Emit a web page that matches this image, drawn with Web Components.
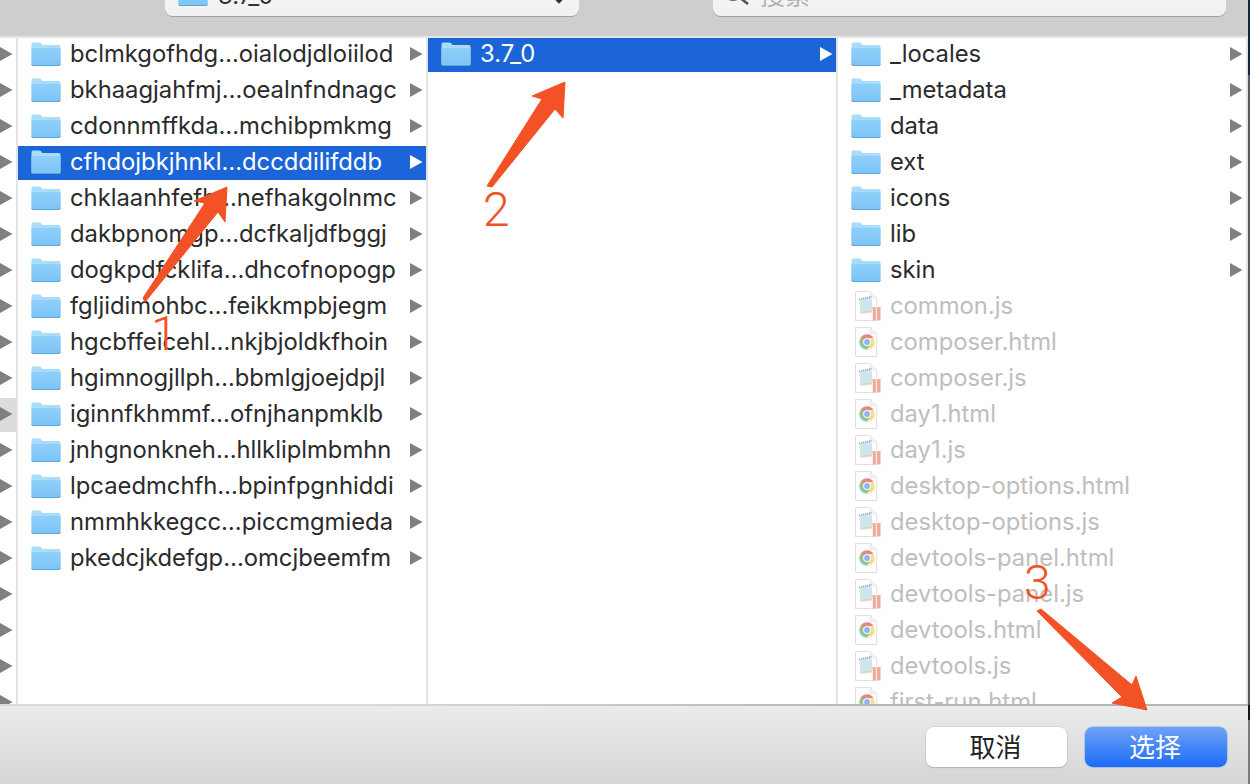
<!DOCTYPE html>
<html lang="zh">
<head>
<meta charset="utf-8">
<title>选择</title>
<style>
    html, body { margin: 0; height: 100%; overflow: hidden; }
    body {
        background: linear-gradient(#14233f 0, #14233f 75px, #5b5b5b 75px, #5b5b5b 705px, #161616 705px, #161616 720px, #7a7a7a 720px);
        font-family: "Inter", "Noto Sans CJK SC", sans-serif;
    }
</style>
</head>
<body>

<file-dialog>
    <dialog-toolbar slot="toolbar" location="3.7_0" placeholder="搜索"></dialog-toolbar>

    <path-stub slot="stub" rows="19" active="10"></path-stub>

    <browser-column>
        <file-row kind="folder" expand>bclmkgofhdg…oialodjdloiilod</file-row>
        <file-row kind="folder" expand>bkhaagjahfmj…oealnfndnagc</file-row>
        <file-row kind="folder" expand>cdonnmffkda…mchibpmkmg</file-row>
        <file-row kind="folder" expand selected>cfhdojbkjhnkl…dccddilifddb</file-row>
        <file-row kind="folder" expand>chklaanhfefh…nefhakgolnmc</file-row>
        <file-row kind="folder" expand>dakbpnomgp…dcfkaljdfbggj</file-row>
        <file-row kind="folder" expand>dogkpdfcklifa…dhcofnopogp</file-row>
        <file-row kind="folder" expand>fgljidimohbc…feikkmpbjegm</file-row>
        <file-row kind="folder" expand>hgcbffeicehl…nkjbjoldkfhoin</file-row>
        <file-row kind="folder" expand>hgimnogjllph…bbmlgjoejdpjl</file-row>
        <file-row kind="folder" expand>iginnfkhmmf…ofnjhanpmklb</file-row>
        <file-row kind="folder" expand>jnhgnonkneh…hllkliplmbmhn</file-row>
        <file-row kind="folder" expand>lpcaedmchfh…bpinfpgnhiddi</file-row>
        <file-row kind="folder" expand>nmmhkkegcc…piccmgmieda</file-row>
        <file-row kind="folder" expand>pkedcjkdefgp…omcjbeemfm</file-row>
    </browser-column>

    <browser-column>
        <file-row kind="folder" expand selected>3.7_0</file-row>
    </browser-column>

    <browser-column>
        <file-row kind="folder" expand>_locales</file-row>
        <file-row kind="folder" expand>_metadata</file-row>
        <file-row kind="folder" expand>data</file-row>
        <file-row kind="folder" expand>ext</file-row>
        <file-row kind="folder" expand>icons</file-row>
        <file-row kind="folder" expand>lib</file-row>
        <file-row kind="folder" expand>skin</file-row>
        <file-row kind="script">common.js</file-row>
        <file-row kind="page">composer.html</file-row>
        <file-row kind="script">composer.js</file-row>
        <file-row kind="page">day1.html</file-row>
        <file-row kind="script">day1.js</file-row>
        <file-row kind="page">desktop-options.html</file-row>
        <file-row kind="script">desktop-options.js</file-row>
        <file-row kind="page">devtools-panel.html</file-row>
        <file-row kind="script">devtools-panel.js</file-row>
        <file-row kind="page">devtools.html</file-row>
        <file-row kind="script">devtools.js</file-row>
        <file-row kind="page">first-run.html</file-row>
    </browser-column>

    <dialog-footer slot="footer">
        <push-button>取消</push-button>
        <push-button primary>选择</push-button>
    </dialog-footer>
</file-dialog>

<note-arrows></note-arrows>

<script>
const FOLDER_ICON = `
    <svg width="30" height="24" viewBox="0 0 30 24">
        <defs>
            <linearGradient id="fold" x1="0" y1="0" x2="0" y2="1">
                <stop offset="0" stop-color="#8fd0fa"/>
                <stop offset="1" stop-color="#7cc3f6"/>
            </linearGradient>
        </defs>
        <path d="M0.5 2 Q0.5 0.5 2 0.5 H8.5 Q9.5 0.5 10.3 1.6 L11.4 3 H28 Q29.5 3 29.5 4.5 V22 Q29.5 23.5 28 23.5 H2 Q0.5 23.5 0.5 22 Z" fill="#a9dcfb"/>
        <path d="M0.5 6 H29.5 V22 Q29.5 23.5 28 23.5 H2 Q0.5 23.5 0.5 22 Z" fill="url(#fold)"/>
        <path d="M0.5 22.4 Q0.7 23.5 2 23.5 H28 Q29.3 23.5 29.5 22.4" fill="none" stroke="#5ea6d8" stroke-width="1"/>
    </svg>`;

const SCRIPT_ICON = `
    <svg width="27" height="32" viewBox="0 0 27 32">
        <path d="M0.5 1 H16 L22.5 7.5 V31 H0.5 Z" fill="#fff" stroke="#dedede"/>
        <path d="M16 1 V7.5 H22.5" fill="#f2f2f2" stroke="#e4e4e4"/>
        <path d="M4.5 9 L17 6.5 L18.5 20 L5.5 22 Z" fill="#cfe6ef"/>
        <path d="M4.5 9 L17 6.5" stroke="#7f8f96" stroke-width="1.4" stroke-dasharray="1 1"/>
        <path d="M5.5 22 L18 20 V22.5 L6 24 Z" fill="#ded6bf"/>
        <rect x="18.5" y="17" width="3" height="14" fill="#f4a698"/>
        <rect x="23" y="17" width="3.5" height="14" fill="#f4a698"/>
    </svg>`;

const PAGE_ICON = `
    <svg width="27" height="32" viewBox="0 0 27 32">
        <path d="M0.5 1 H16 L22.5 7.5 V31 H0.5 Z" fill="#fff" stroke="#dedede"/>
        <path d="M16 1 V7.5 H22.5" fill="#f2f2f2" stroke="#e4e4e4"/>
        <g transform="translate(12.5 16)">
            <path d="M0 -8 A8 8 0 0 1 6.93 -4 L0 -4 A4 4 0 0 0 -3.46 -2 L-3.46 -2 L-6.93 -4 A8 8 0 0 1 0 -8 Z" fill="#e58a80"/>
            <path d="M6.93 -4 A8 8 0 0 1 0 8 L3.46 2 A4 4 0 0 0 3.46 -2 L0 -4 Z" fill="#f6e08e"/>
            <path d="M-6.93 -4 A8 8 0 0 0 0 8 L3.46 2 A4 4 0 0 1 -3.46 2 A4 4 0 0 1 -3.46 -2 Z" fill="#8fc79a"/>
            <circle r="3.8" fill="#fff"/>
            <circle r="3" fill="#8fb3ee"/>
        </g>
    </svg>`;

class FileDialog extends HTMLElement {
    constructor() {
        super();
        this.attachShadow({ mode: 'open' });
        this.shadowRoot.innerHTML = `
            <style>
                :host {
                    display: flex;
                    flex-direction: column;
                    width: 1248px;
                    height: 784px;
                    background: #e4e4e4;
                    overflow: hidden;
                }
                .panes {
                    flex: 1;
                    min-height: 0;
                    display: grid;
                    grid-template-columns: 16px repeat(3, 408px);
                    column-gap: 2px;
                    padding-top: 2px;
                    overflow: hidden;
                }
            </style>
            <slot name="toolbar"></slot>
            <div class="panes">
                <slot name="stub"></slot>
                <slot></slot>
            </div>
            <slot name="footer"></slot>
        `;
    }
}

class DialogToolbar extends HTMLElement {
    constructor() {
        super();
        this.attachShadow({ mode: 'open' });
    }

    connectedCallback() {
        const location = this.getAttribute('location') || '';
        const placeholder = this.getAttribute('placeholder') || '';
        this.shadowRoot.innerHTML = `
            <style>
                :host {
                    display: flex;
                    flex: none;
                    height: 36px;
                    box-sizing: border-box;
                    align-items: flex-end;
                    padding: 0 22px 20px 165px;
                    background: #cecece;
                    overflow: hidden;
                }
                .field {
                    flex: none;
                    display: flex;
                    align-items: center;
                    height: 44px;
                    box-sizing: border-box;
                    background: linear-gradient(#fafafa, #f1f1f1);
                    border-radius: 8px;
                    box-shadow: 0 1px 0 #a2a2a2;
                    font-size: 23.8px;
                }
                .popup {
                    width: 414px;
                    margin-right: 134px;
                    padding: 0 13px;
                    color: #333;
                }
                .popup span { flex: 1; margin-left: 10px; padding-top: 3px; }
                .search {
                    width: 513px;
                    padding-left: 9px;
                    color: #b2b2b2;
                }
                .search span { margin-left: 10px; font-family: "Noto Sans CJK SC", sans-serif; font-size: 25px; }
            </style>
            <div class="field popup">
                ${FOLDER_ICON}
                <span>${location}</span>
                <svg width="14" height="20" viewBox="0 0 14 20"><path d="M2 13 L7 18 L12 13" fill="none" stroke="#333" stroke-width="2.4"/></svg>
            </div>
            <div class="field search">
                <svg width="28" height="28" viewBox="0 0 28 28"><circle cx="11" cy="11" r="9" fill="none" stroke="#666" stroke-width="2"/><path d="M17.5 17.5 L26 24" stroke="#555" stroke-width="2.6"/></svg>
                <span>${placeholder}</span>
            </div>
        `;
    }
}

class PathStub extends HTMLElement {
    constructor() {
        super();
        this.attachShadow({ mode: 'open' });
    }

    connectedCallback() {
        const rows = Number(this.getAttribute('rows'));
        const active = Number(this.getAttribute('active'));
        let html = '';
        for (let i = 0; i < rows; i++) {
            html += `<div class="${i === active ? 'on' : ''}"><svg width="13" height="14" viewBox="0 0 13 14"><path d="M0 0 L12.5 7 L0 14 Z" fill="#808080"/></svg></div>`;
        }
        this.shadowRoot.innerHTML = `
            <style>
                :host { display: block; background: #fff; overflow: hidden; }
                div { height: 34px; margin-bottom: 2px; display: flex; align-items: center; box-sizing: border-box; padding-bottom: 2px; }
                .on { background: #dcdcdc; }
            </style>
            ${html}
        `;
    }
}

class BrowserColumn extends HTMLElement {
    constructor() {
        super();
        this.attachShadow({ mode: 'open' });
        this.shadowRoot.innerHTML = `
            <style>
                :host { display: block; background: #fff; overflow: hidden; min-width: 0; }
            </style>
            <slot></slot>
        `;
    }
}

class FileRow extends HTMLElement {
    constructor() {
        super();
        this.attachShadow({ mode: 'open' });
    }

    connectedCallback() {
        const kind = this.getAttribute('kind');
        const selected = this.hasAttribute('selected');
        const icon = kind === 'folder' ? FOLDER_ICON : kind === 'page' ? PAGE_ICON : SCRIPT_ICON;
        const arrow = this.hasAttribute('expand')
            ? `<svg class="arrow" width="13" height="14" viewBox="0 0 13 14"><path d="M0 0 L12.5 7 L0 14 Z" fill="${selected ? '#fff' : '#808080'}"/></svg>`
            : '';
        this.shadowRoot.innerHTML = `
            <style>
                :host {
                    display: flex;
                    align-items: center;
                    height: 34px;
                    margin-bottom: 2px;
                    padding: 0 0 2px 13px;
                    box-sizing: border-box;
                    font-size: 23.8px;
                    white-space: nowrap;
                    color: ${kind === 'folder' ? '#2b2b2b' : '#bebebe'};
                }
                :host([selected]) { background: #1c65d8; color: #fff; }
                .icon { flex: none; width: 30px; height: 32px; display: flex; align-items: center; justify-content: ${kind === 'folder' ? 'flex-start' : 'center'}; }
                .icon svg { margin-left: ${kind === 'folder' ? 0 : 4}px; }
                .name { flex: 1; margin-left: 9px; padding-bottom: 2px; }
                .arrow { flex: none; margin-right: 3px; }
            </style>
            <span class="icon">${icon}</span>
            <span class="name"><slot></slot></span>
            ${arrow}
        `;
    }
}

class DialogFooter extends HTMLElement {
    constructor() {
        super();
        this.attachShadow({ mode: 'open' });
        this.shadowRoot.innerHTML = `
            <style>
                :host {
                    display: flex;
                    flex: none;
                    height: 80px;
                    box-sizing: border-box;
                    justify-content: flex-end;
                    align-items: flex-start;
                    gap: 18px;
                    padding: 23px 21px 0 0;
                    background:
                        linear-gradient(90deg, #d8d8d8 0, #d8d8d8 30%, #b6b6b6 70%) top / 100% 2px no-repeat,
                        linear-gradient(#ececec, #d5d5d5);
                }
            </style>
            <slot></slot>
        `;
    }
}

class PushButton extends HTMLElement {
    constructor() {
        super();
        this.attachShadow({ mode: 'open' });
        this.shadowRoot.innerHTML = `
            <style>
                :host {
                    display: flex;
                    align-items: center;
                    justify-content: center;
                    width: 141px;
                    height: 40px;
                    box-sizing: border-box;
                    padding: 0 2px 3px 0;
                    border-radius: 8px;
                    background: #fff;
                    color: #222;
                    box-shadow: 0 0 0 0.5px #c4c4c4, 0 1px 1px #a8a8a8;
                    font: 26px "Noto Sans CJK SC", sans-serif;
                }
                :host([primary]) {
                    width: 142px;
                    background: linear-gradient(#6ea2f6, #1c6cf8);
                    color: #fff;
                    box-shadow: 0 0 0 0.5px #7fa6ec;
                }
            </style>
            <slot></slot>
        `;
    }
}

class NoteArrows extends HTMLElement {
    constructor() {
        super();
        this.attachShadow({ mode: 'open' });
        this.shadowRoot.innerHTML = `
            <style>
                :host { position: absolute; left: 0; top: 0; width: 1250px; height: 784px; pointer-events: none; }
                svg { display: block; }
                polygon { fill: #f25225; stroke: #f25225; stroke-width: 1; stroke-linejoin: round; }
                text { fill: #f25225; font: 300 48px Roboto, sans-serif; }
            </style>
            <svg width="1250" height="784" viewBox="0 0 1250 784">
                <polygon points="143,298 145,302 218,212 225,222 227,187 194,201 205,203"/>
                <polygon points="487,186 492,187 555,109 563,118 565,82 532,96 542,99"/>
                <polygon points="1037,611 1041,609 1132,685 1136,676 1147,710 1112,703 1122,697"/>
                <text x="151" y="350">1</text>
                <text x="483" y="226">2</text>
                <text x="1024" y="599">3</text>
            </svg>
        `;
    }
}

customElements.define('file-dialog', FileDialog);
customElements.define('dialog-toolbar', DialogToolbar);
customElements.define('path-stub', PathStub);
customElements.define('browser-column', BrowserColumn);
customElements.define('file-row', FileRow);
customElements.define('dialog-footer', DialogFooter);
customElements.define('push-button', PushButton);
customElements.define('note-arrows', NoteArrows);
</script>
</body>
</html>
